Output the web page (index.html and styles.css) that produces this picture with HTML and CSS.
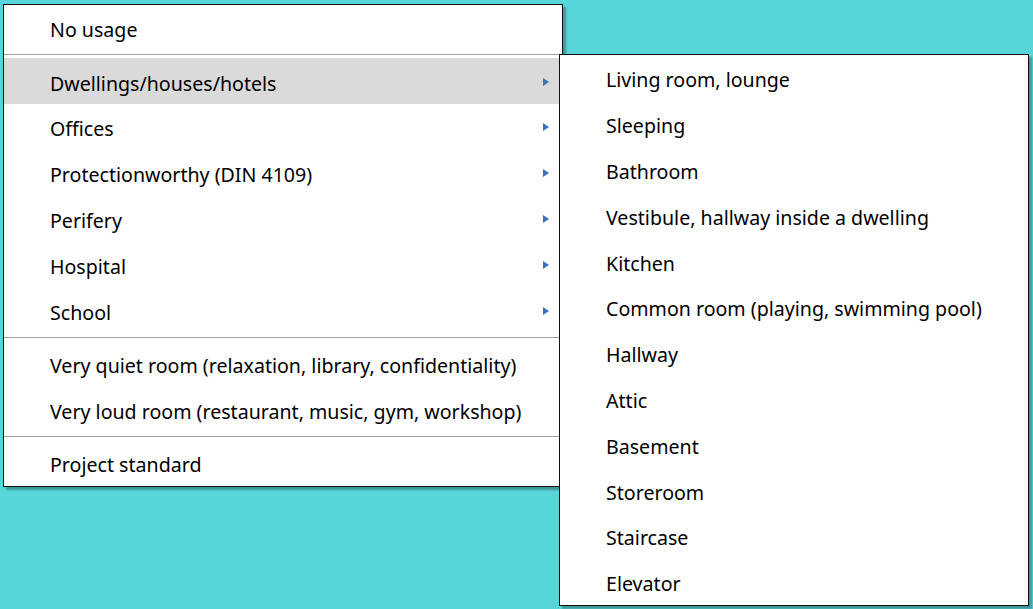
FILE: index.html
```html
<!DOCTYPE html>
<html lang="en">
<head>
  <meta charset="UTF-8">
  <meta name="viewport" content="width=device-width, initial-scale=1.0">
  <title>Room usage</title>
  <link rel="stylesheet" href="styles.css">
</head>
<body>
  <!-- main usage menu -->
  <div class="menu menu_main">
    <div class="menu_item">No usage</div>
    <div class="menu_sep"></div>
    <div class="menu_item sub active">Dwellings/houses/hotels<span class="arrow"></span></div>
    <div class="menu_item sub">Offices<span class="arrow"></span></div>
    <div class="menu_item sub">Protectionworthy (DIN 4109)<span class="arrow"></span></div>
    <div class="menu_item sub">Perifery<span class="arrow"></span></div>
    <div class="menu_item sub">Hospital<span class="arrow"></span></div>
    <div class="menu_item sub">School<span class="arrow"></span></div>
    <div class="menu_sep"></div>
    <div class="menu_item">Very quiet room (relaxation, library, confidentiality)</div>
    <div class="menu_item">Very loud room (restaurant, music, gym, workshop)</div>
    <div class="menu_sep"></div>
    <div class="menu_item">Project standard</div>
  </div>

  <!-- submenu for dwellings -->
  <div class="menu menu_sub">
    <div class="menu_item">Living room, lounge</div>
    <div class="menu_item">Sleeping</div>
    <div class="menu_item">Bathroom</div>
    <div class="menu_item">Vestibule, hallway inside a dwelling</div>
    <div class="menu_item">Kitchen</div>
    <div class="menu_item">Common room (playing, swimming pool)</div>
    <div class="menu_item">Hallway</div>
    <div class="menu_item">Attic</div>
    <div class="menu_item">Basement</div>
    <div class="menu_item">Storeroom</div>
    <div class="menu_item">Staircase</div>
    <div class="menu_item">Elevator</div>
  </div>
</body>
</html>
```

FILE: styles.css
```css
* {
  margin: 0;
  padding: 0;
  box-sizing: border-box;
}
body {
  width: 1033px;
  height: 609px;
  overflow: hidden;
  position: relative;
  background-color: #56d6d8;
  font-family: "Noto Sans", "Open Sans", sans-serif;
  font-size: 19.6px;
  color: #000;
}
.menu {
  position: absolute;
  display: flex;
  flex-direction: column;
  background-color: #fff;
  border: 1px solid #111;
  box-shadow: 3px 3px 2px rgba(0, 0, 0, .3);
}
.menu_main {
  left: 3px;
  top: 4px;
  width: 560px;
  height: 483px;
}
.menu_sub {
  left: 559px;
  top: 54px;
  width: 470px;
  height: 552px;
  z-index: 2;
}
.menu_item {
  height: 45.8px;
  flex-shrink: 0;
  display: flex;
  align-items: center;
  padding: 4px 13px 0 46px;
  white-space: nowrap;
}
.menu_item.sub {
  justify-content: space-between;
}
.menu_item.active {
  background-color: #dadada;
}
.arrow {
  width: 0;
  height: 0;
  margin-top: -3px;
  border-left: 6px solid #3a74b6;
  border-top: 4.5px solid transparent;
  border-bottom: 4.5px solid transparent;
}
.menu_sep {
  height: 1px;
  flex-shrink: 0;
  margin: 3.5px 0 3px;
  background-color: #a0a0a0;
}
```
